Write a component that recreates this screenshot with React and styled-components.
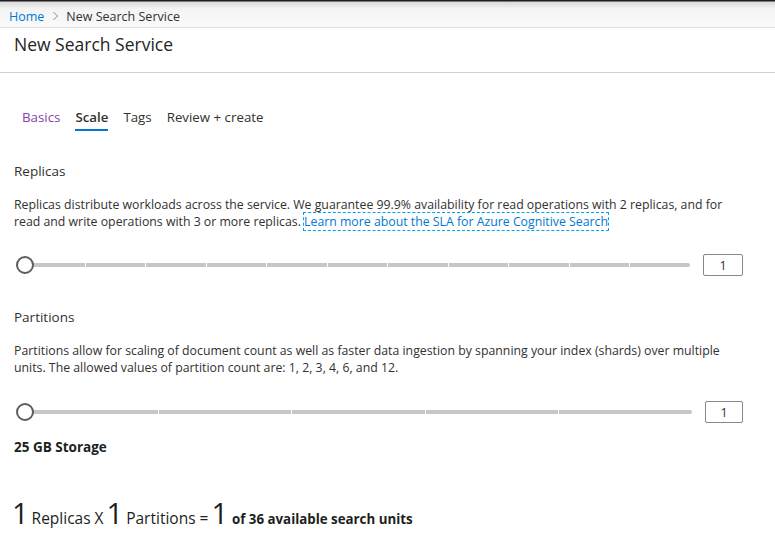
import React from "react";
import styled, { createGlobalStyle } from "styled-components";

const Global = createGlobalStyle`
  html, body {
    margin: 0;
    padding: 0;
    background: #fff;
  }
  body {
    font-family: "Open Sans", "Noto Sans", "Liberation Sans", sans-serif;
    color: #323130;
    overflow: hidden;
  }
`;

const Page = styled.div`
  width: 775px;
  height: 546px;
`;

const Crumbs = styled.div`
  height: 28px;
  display: flex;
  align-items: center;
  padding: 5px 0 0 9px;
  box-sizing: border-box;
  font-size: 12.5px;
  background: linear-gradient(#1e1e1e 0, #1e1e1e 1px, #d9d9d9 2px, #f4f4f4 9px, #fafafa 28px);
  border-bottom: 1px solid #e1dfdd;
`;

const CrumbLink = styled.span`
  color: #0078d4;
`;

const Chevron = styled.span`
  color: #8a8886;
  margin: 0 7px 0 8px;
  display: inline-flex;
`;

const TitleBar = styled.div`
  height: 44px;
  padding-left: 14px;
  border-bottom: 1px solid #d2d0ce;
`;

const Title = styled.h1`
  margin: 0;
  padding-top: 4px;
  font-size: 17.5px;
  font-weight: 400;
  color: #252423;
`;

const Body = styled.div`
  padding: 0 14px;
`;

const Tabs = styled.div`
  display: flex;
  gap: 15px;
  padding: 34px 0 0 8px;
  height: 56px;
  box-sizing: border-box;
`;

const Tab = styled.div`
  font-size: 13.3px;
  height: 24px;
  line-height: 21px;
  box-sizing: border-box;
  color: ${(p) => (p.$visited ? "#8a3fab" : "#323130")};
  font-weight: ${(p) => (p.$active ? 600 : 400)};
  border-bottom: 2px solid ${(p) => (p.$active ? "#0078d4" : "transparent")};
`;

const SectionLabel = styled.div`
  font-size: 13.5px;
  margin-top: ${(p) => p.$top}px;
  line-height: 18px;
`;

const Para = styled.p`
  margin: 16px 0 0;
  font-size: 12.3px;
  line-height: 17px;
  width: 725px;
`;

const Learn = styled.a`
  color: #0078d4;
  text-decoration: none;
  outline: 1px dashed #00a2ed;
  outline-offset: 0;
`;

const SliderRow = styled.div`
  display: flex;
  align-items: center;
  margin-top: ${(p) => p.$top}px;
  margin-right: 18px;
`;

const TrackWrap = styled.div`
  position: relative;
  flex: 1;
  margin-left: 11px;
  margin-right: ${(p) => p.$gap}px;
  height: 4px;
`;

const Track = styled.div`
  display: flex;
  gap: 1px;
  height: 4px;
`;

const Segment = styled.div`
  flex: 1;
  background: #c8c6c4;
  &:last-child {
    border-radius: 0 2px 2px 0;
  }
`;

const Thumb = styled.div`
  position: absolute;
  left: -9px;
  top: -7px;
  width: 14px;
  height: 14px;
  border: 2px solid #605e5c;
  border-radius: 50%;
  background: #fff;
`;

const ValueBox = styled.div`
  width: ${(p) => p.$w}px;
  height: 22px;
  box-sizing: border-box;
  border: 1px solid #8a8886;
  border-radius: 2px;
  display: flex;
  align-items: center;
  justify-content: center;
  font-size: 12.5px;
`;

const Storage = styled.div`
  margin-top: 15px;
  font-size: 13.5px;
  font-weight: 700;
  color: #201f1e;
`;

const Summary = styled.div`
  margin-top: 41px;
  margin-left: -2px;
  display: flex;
  align-items: baseline;
  color: #201f1e;
`;

const Big = styled.span`
  font-size: 29px;
  font-weight: 400;
  line-height: 32px;
  margin-right: 3px;
`;

const Unit = styled.span`
  font-size: 15.5px;
  margin-right: 3px;
`;

const Avail = styled.span`
  font-size: 13.3px;
  font-weight: 700;
  margin-left: 1px;
`;

function Slider({ steps, gap, boxWidth, top }) {
  return (
    <SliderRow $top={top}>
      <TrackWrap $gap={gap}>
        <Track>
          {Array.from({ length: steps }).map((_, i) => (
            <Segment key={i} />
          ))}
        </Track>
        <Thumb />
      </TrackWrap>
      <ValueBox $w={boxWidth}>1</ValueBox>
    </SliderRow>
  );
}

export default function App() {
  return (
    <Page>
      <Global />
      <Crumbs>
        <CrumbLink>Home</CrumbLink>
        <Chevron>
          <svg width="7" height="10" viewBox="0 0 7 10">
            <path d="M1.5 1l4 4-4 4" fill="none" stroke="#8a8886" strokeWidth="1" />
          </svg>
        </Chevron>
        <span>New Search Service</span>
      </Crumbs>
      <TitleBar>
        <Title>New Search Service</Title>
      </TitleBar>
      <Body>
        <Tabs>
          <Tab $visited>Basics</Tab>
          <Tab $active>Scale</Tab>
          <Tab>Tags</Tab>
          <Tab>Review + create</Tab>
        </Tabs>
        <SectionLabel $top={33}>Replicas</SectionLabel>
        <Para>
          Replicas distribute workloads across the service. We guarantee 99.9%
          availability for read operations with 2 replicas, and for read and
          write operations with 3 or more replicas.{" "}
          <Learn href="#">Learn more about the SLA for Azure Cognitive Search</Learn>
        </Para>
        <Slider steps={11} gap={13} boxWidth={40} top={24} />
        <SectionLabel $top={32}>Partitions</SectionLabel>
        <Para>
          Partitions allow for scaling of document count as well as faster data
          ingestion by spanning your index (shards) over multiple units. The
          allowed values of partition count are: 1, 2, 3, 4, 6, and 12.
        </Para>
        <Slider steps={5} gap={13} boxWidth={38} top={25} />
        <Storage>25 GB Storage</Storage>
        <Summary>
          <Big>1</Big>
          <Unit>Replicas X</Unit>
          <Big>1</Big>
          <Unit>Partitions =</Unit>
          <Big>1</Big>
          <Avail>of 36 available search units</Avail>
        </Summary>
      </Body>
    </Page>
  );
}
